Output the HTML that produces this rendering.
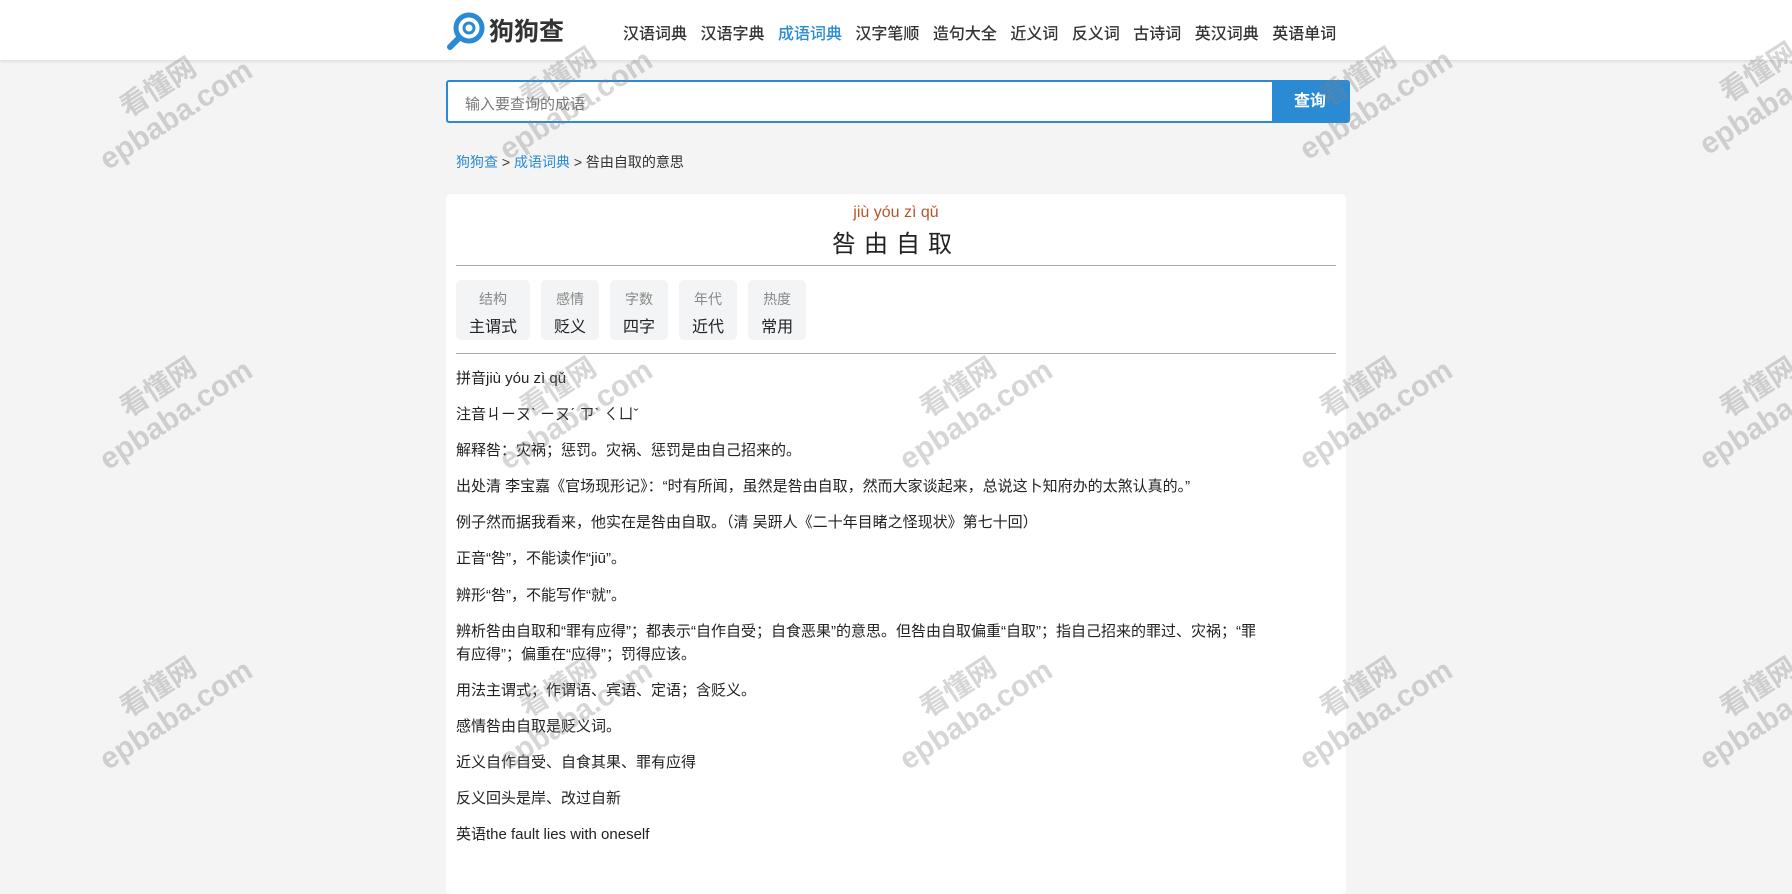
<!DOCTYPE html>
<html><head><meta charset="utf-8"><style>
*{margin:0;padding:0;box-sizing:border-box}
body{width:1792px;height:852px;overflow:hidden;background:#f4f4f4;font-family:"Liberation Sans","Noto Sans CJK SC",sans-serif;color:#222;position:relative}
.hdr{position:absolute;left:0;top:0;width:1792px;height:60px;background:#fff;box-shadow:0 1px 4px rgba(0,0,0,.12)}
.logo{position:absolute;left:447px;top:10px;height:40px;display:flex;align-items:center}
.logo span{font-size:25px;font-weight:bold;color:#333;margin-left:2px}
.nav{position:absolute;left:623px;top:20px;font-size:16px;color:#333;white-space:nowrap;font-weight:500}
.nav a{margin-right:9px}
.nav a.on{color:#2a8ad4}
.search{position:absolute;left:446px;top:80px;width:904px;height:43px;border:2px solid #2a8ad4;background:#fff;border-radius:3px}
.search .ph{position:absolute;left:17px;top:11px;font-size:15px;color:#777}
.search .btn{position:absolute;right:0;top:0;width:76px;height:39px;background:#2a8ad4;color:#fff;font-size:16px;font-weight:bold;text-align:center;line-height:39px}
.bc{position:absolute;left:456px;top:152px;font-size:14px;color:#333}
.bc a{color:#2a8ad4}
.card{position:absolute;left:446px;top:194px;width:900px;height:700px;background:#fff;border-radius:5px}
.py{position:absolute;left:0;width:900px;top:10px;text-align:center;color:#b5562a;font-size:16px}
.tt{position:absolute;left:0;width:900px;top:30px;text-align:center;font-size:24px;letter-spacing:8px;color:#222}
.hr{position:absolute;left:10px;width:880px;height:1px;background:#aaa}
.tags{position:absolute;left:10px;top:86px;display:flex}
.tag{background:#f3f4f5;border-radius:5px;height:60px;padding:0 13px;margin-right:11px;text-align:center}
.tag .a{color:#888;font-size:14px;margin-top:9px}
.tag .b{color:#222;font-size:16px;margin-top:4px}
.ct{position:absolute;left:10px;top:173px;width:880px;font-size:15px;line-height:23px;color:#222}
.ct p{margin-bottom:13.1px}
.wm{position:absolute;color:rgba(130,130,130,.33);font-weight:bold;transform:rotate(-33deg);text-align:center;line-height:1.1;pointer-events:none}
.wm .x{font-size:28px}.wm .y{font-size:30px}
</style></head><body>
<div class="hdr">
<div class="logo"><svg width="40" height="40" viewBox="0 0 40 40"><circle cx="22" cy="18" r="13" fill="none" stroke="#2a8ad4" stroke-width="5"/><circle cx="22" cy="18" r="5" fill="none" stroke="#2a8ad4" stroke-width="3"/><path d="M12 28 L3 37" stroke="#2a8ad4" stroke-width="6" stroke-linecap="round"/></svg><span>狗狗查</span></div>
<div class="nav"><a>汉语词典</a> <a>汉语字典</a> <a class="on">成语词典</a> <a>汉字笔顺</a> <a>造句大全</a> <a>近义词</a> <a>反义词</a> <a>古诗词</a> <a>英汉词典</a> <a>英语单词</a></div>
</div>
<div class="search"><div class="ph">输入要查询的成语</div><div class="btn">查询</div></div>
<div class="bc"><a>狗狗查</a> &gt; <a>成语词典</a> &gt; 咎由自取的意思</div>
<div class="card">
<div class="py">jiù yóu zì qǔ</div>
<div class="tt">咎由自取</div>
<div class="hr" style="top:71px"></div>
<div class="tags">
<div class="tag"><div class="a">结构</div><div class="b">主谓式</div></div>
<div class="tag"><div class="a">感情</div><div class="b">贬义</div></div>
<div class="tag"><div class="a">字数</div><div class="b">四字</div></div>
<div class="tag"><div class="a">年代</div><div class="b">近代</div></div>
<div class="tag"><div class="a">热度</div><div class="b">常用</div></div>
</div>
<div class="hr" style="top:159px"></div>
<div class="ct">
<p>拼音jiù yóu zì qǔ</p>
<p>注音ㄐㄧㄡˋ ㄧㄡˊ ㄗˋ ㄑㄩˇ</p>
<p>解释咎：灾祸；惩罚。灾祸、惩罚是由自己招来的。</p>
<p>出处清 李宝嘉《官场现形记》：“时有所闻，虽然是咎由自取，然而大家谈起来，总说这卜知府办的太煞认真的。”</p>
<p>例子然而据我看来，他实在是咎由自取。（清 吴趼人《二十年目睹之怪现状》第七十回）</p>
<p>正音“咎”，不能读作“jiū”。</p>
<p>辨形“咎”，不能写作“就”。</p>
<p>辨析咎由自取和“罪有应得”；都表示“自作自受；自食恶果”的意思。但咎由自取偏重“自取”；指自己招来的罪过、灾祸；“罪<br>有应得”；偏重在“应得”；罚得应该。</p>
<p>用法主谓式；作谓语、宾语、定语；含贬义。</p>
<p>感情咎由自取是贬义词。</p>
<p>近义自作自受、自食其果、罪有应得</p>
<p>反义回头是岸、改过自新</p>
<p>英语the fault lies with oneself</p>
</div>
</div>
<div class="wm" style="left:80px;top:70px"><div class="x">看懂网</div><div class="y">epbaba.com</div></div>
<div class="wm" style="left:480px;top:60px"><div class="x">看懂网</div><div class="y">epbaba.com</div></div>
<div class="wm" style="left:1280px;top:60px"><div class="x">看懂网</div><div class="y">epbaba.com</div></div>
<div class="wm" style="left:1680px;top:55px"><div class="x">看懂网</div><div class="y">epbaba.com</div></div>
<div class="wm" style="left:80px;top:370px"><div class="x">看懂网</div><div class="y">epbaba.com</div></div>
<div class="wm" style="left:480px;top:370px"><div class="x">看懂网</div><div class="y">epbaba.com</div></div>
<div class="wm" style="left:880px;top:370px"><div class="x">看懂网</div><div class="y">epbaba.com</div></div>
<div class="wm" style="left:1280px;top:370px"><div class="x">看懂网</div><div class="y">epbaba.com</div></div>
<div class="wm" style="left:1680px;top:370px"><div class="x">看懂网</div><div class="y">epbaba.com</div></div>
<div class="wm" style="left:80px;top:670px"><div class="x">看懂网</div><div class="y">epbaba.com</div></div>
<div class="wm" style="left:480px;top:670px"><div class="x">看懂网</div><div class="y">epbaba.com</div></div>
<div class="wm" style="left:880px;top:670px"><div class="x">看懂网</div><div class="y">epbaba.com</div></div>
<div class="wm" style="left:1280px;top:670px"><div class="x">看懂网</div><div class="y">epbaba.com</div></div>
<div class="wm" style="left:1680px;top:670px"><div class="x">看懂网</div><div class="y">epbaba.com</div></div>
</body></html>
